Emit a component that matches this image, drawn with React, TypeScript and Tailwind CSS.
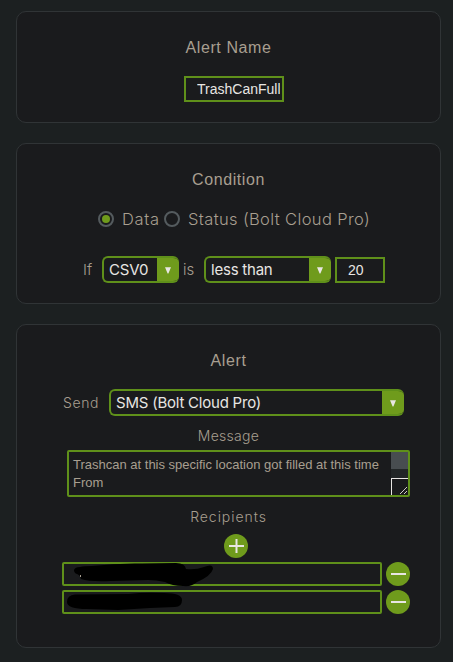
import type { ReactNode } from 'react';

function Card({ className, children }: { className: string; children: ReactNode }) {
  return (
    <section className={`flex w-[425px] flex-col items-center rounded-[10px] border border-[#303436] bg-[#1a1b1d] ${className}`}>
      {children}
    </section>
  );
}

function Title({ children }: { children: ReactNode }) {
  return (
    <h2 className="h-5 whitespace-nowrap font-['Liberation_Sans',Arial,sans-serif] text-[16px] font-normal leading-5 tracking-[0.6px] text-[#a89f90]">
      {children}
    </h2>
  );
}

function Select({ className, children }: { className: string; children: ReactNode }) {
  return (
    <div className={`flex h-[27px] overflow-hidden rounded-[6px] border-2 border-r-0 border-[#5f901a] text-[#e8e6e3] ${className}`}>
      <span className="flex-1 whitespace-nowrap pl-[5px] text-[15px] font-normal leading-[23px] tracking-[-0.22px]">{children}</span>
      <span className="-my-0.5 flex w-[22px] items-center justify-center bg-[#6f9b1c]">
        <svg width="6" height="7" viewBox="0 0 6 7" className="mt-0.5">
          <path d="M0 0.3H6L3.4 6.5H2.6Z" fill="#e8e6e3" />
        </svg>
      </span>
    </div>
  );
}

function Radio({ checked }: { checked?: boolean }) {
  return (
    <span className="flex size-4 items-center justify-center rounded-full border-2 border-[#545b5e]">
      {checked && <span className="size-2 rounded-full bg-[#6f9b1c]" />}
    </span>
  );
}

function RoundButton({ plus }: { plus?: boolean }) {
  return (
    <button className="size-6 shrink-0 rounded-full bg-[#6f9b1c]">
      <svg width="24" height="24" viewBox="0 0 24 24" fill="none" stroke="#e8e6e3" strokeWidth="2">
        <path d="M5 12H20" />
        {plus && <path d="M12.5 5V19" />}
      </svg>
    </button>
  );
}

function Recipient({ children }: { children: ReactNode }) {
  return (
    <div className="flex gap-1">
      <div className="relative h-6 w-80 rounded-[2px] border-2 border-[#5f901a]">
        <svg className="absolute -left-0.5 -top-0.5 overflow-visible" width="160" height="26" viewBox="0 0 160 26">
          {children}
        </svg>
      </div>
      <RoundButton />
    </div>
  );
}

export default function App() {
  return (
    <main className="flex h-[662px] w-[453px] flex-col gap-5 bg-[#1c2021] pl-4 pt-[11px] font-['Inter','Open_Sans',sans-serif] font-light text-[#a89f90]">
      <Card className="h-28 pt-[26px]">
        <Title>Alert Name</Title>
        <div className="ml-[11px] mt-[18px] h-[26px] w-[100px] overflow-hidden border-2 border-[#5f901a] pl-[11px] pr-0.5 font-['Liberation_Sans',Arial,sans-serif] text-[14px] font-normal leading-[22px] text-[#e8e6e3]">
          <span className="block overflow-hidden">TrashCanFull</span>
        </div>
      </Card>

      <Card className="h-[161px] pt-[26px]">
        <Title>Condition</Title>
        <div className="mt-[17px] flex h-6 w-full items-center pl-[81px] text-[16.5px]">
          <Radio checked />
          <span className="ml-2 w-[42px] whitespace-nowrap tracking-[0.7px]">Data</span>
          <Radio />
          <span className="ml-2 whitespace-nowrap tracking-[0.37px]">Status (Bolt Cloud Pro)</span>
        </div>
        <div className="mt-[25px] flex h-[27px] w-full items-center pl-[66px] text-[15px]">
          <span className="w-[19px] pt-0.5">If</span>
          <Select className="w-[77px]">CSV0</Select>
          <span className="ml-1 w-[21px] pt-0.5">is</span>
          <Select className="w-[127px]">less than</Select>
          <div className="ml-1 mt-px h-[26px] w-[50px] border-2 border-[#5f901a] pl-[11px] font-['Liberation_Sans',Arial,sans-serif] text-[14px] font-normal leading-[22px] text-[#e8e6e3]">
            20
          </div>
        </div>
      </Card>

      <Card className="h-[324px] pt-[26px]">
        <Title>Alert</Title>
        <div className="mt-[18px] flex h-[27px] w-full items-center pl-[46px]">
          <span className="w-[46px] text-[14px] tracking-[0.6px]">Send</span>
          <Select className="w-[295px]">SMS (Bolt Cloud Pro)</Select>
        </div>
        <span className="mt-[10px] h-5 text-[14px] leading-5 tracking-[0.3px]">Message</span>
        <div className="ml-5 mt-1 flex h-[47px] w-[343px] rounded-[2px] border-2 border-[#5f901a]">
          <p className="w-[322px] whitespace-pre pl-1 pt-[4px] font-['Liberation_Sans',Arial,sans-serif] text-[13px] font-normal leading-[18px]">
            {'Trashcan at this specific location got filled at this time\nFrom'}
          </p>
          <div className="flex w-[17px] flex-col bg-[#222627]">
            <div className="h-[17px] bg-[#484d50]" />
            <div className="mt-[9px] h-[17px] border-l border-t border-[#e8e6e3] bg-[#1a1b1d]">
              <svg width="16" height="16" viewBox="0 0 16 16" stroke="#d0cdc8" strokeWidth="1">
                <path d="M8 15L15 8M12 15L15 12" />
              </svg>
            </div>
          </div>
        </div>
        <span className="mt-[10px] h-5 text-[14px] leading-5 tracking-[0.95px]">Recipients</span>
        <div className="ml-[15px] mt-[7px] h-6">
          <RoundButton plus />
        </div>
        <div className="ml-[15px] mt-1 flex flex-col gap-1">
          <Recipient>
            <path d="M12 8Q13 5 18 5Q22 4 30 4Q55 1 80 1.5L114 1Q123 1 124 7Q134 8 142 5Q151 1 151 7Q149 14 135 20Q130 25 121 24Q110 24 103 20Q94 18 86 18L49 19Q28 20 19 17Q18 13 15 12Q12 11 12 8Z" fill="#000" />
            <rect x="18" y="13" width="1" height="2" fill="#a89f90" />
          </Recipient>
          <Recipient>
            <path d="M5 12Q5 5 13 4.500L67 4Q82 2 102 3Q120 3 120 10Q120 17 113 17L88 18L56 20L25 19Q5 19 5 12Z" fill="#000" />
          </Recipient>
        </div>
      </Card>
    </main>
  );
}
